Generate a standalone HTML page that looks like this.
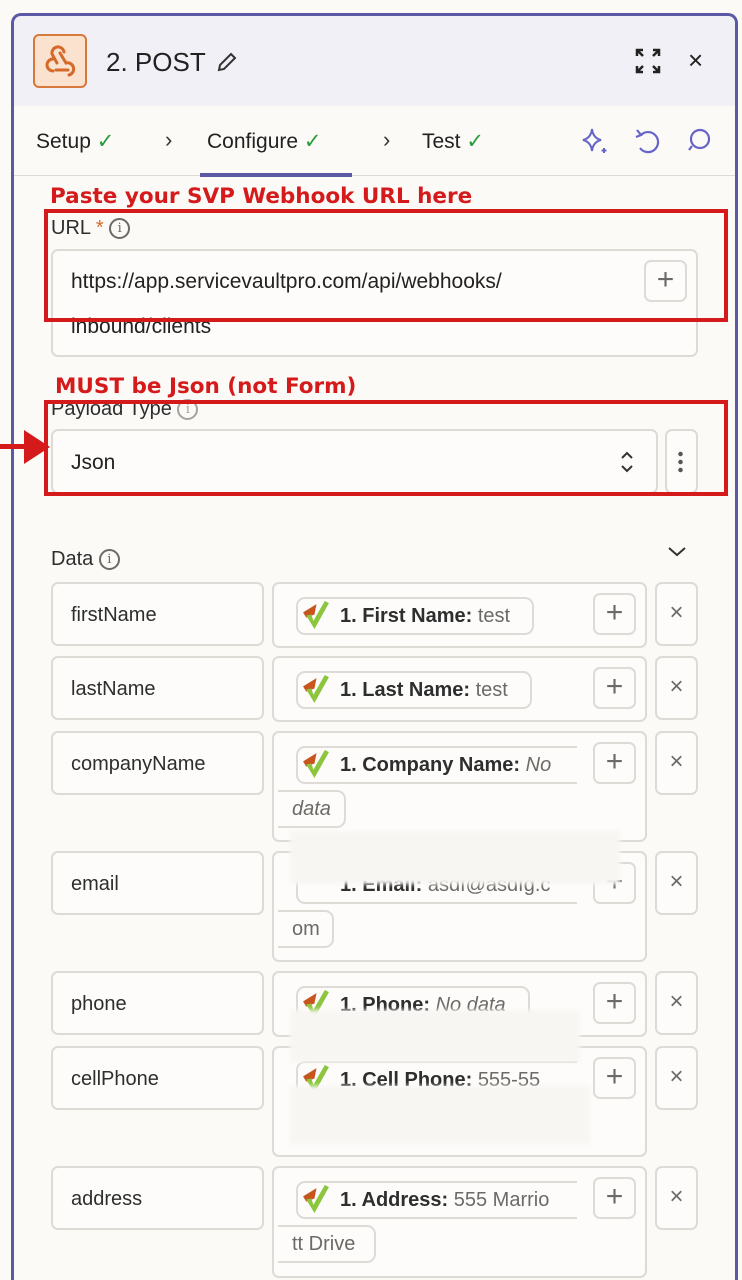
<!DOCTYPE html><html style="width:742px;height:1280px;overflow:hidden"><head><style>
*{box-sizing:border-box;margin:0;padding:0}
body{width:742px;height:1280px;background:#fbfaf7;font-family:"Liberation Sans",sans-serif;color:#2d2e2e;position:relative;overflow:hidden}
.a{position:absolute}
.box{position:absolute;border:2px solid #dddbd6;border-radius:7px;background:#fdfcfa}
.lbl{position:absolute;font-size:20px;color:#2d2e2e}
.chip{position:absolute;border:2px solid #dddbd6;border-radius:9px;background:#fdfcfa;height:38px;font-size:20px;line-height:34px;padding-left:42px;white-space:nowrap;overflow:hidden}
.chip b{font-weight:bold;color:#2d2e2e}
.chip span{color:#6b6a66}
.plus{position:absolute;border:2px solid #dddbd6;border-radius:7px;background:#fdfcfa;width:43px;height:42px;text-align:center;font-size:30px;line-height:36px;color:#6b6a66;font-weight:300}
.x{position:absolute;border:2px solid #dddbd6;border-radius:7px;background:#fdfcfa;width:43px;height:64px;text-align:center;font-size:24px;line-height:58px;color:#6b6a66}
.blur{position:absolute;background:#f7f6f3;filter:blur(2px)}
.red{position:absolute;border:4px solid #d41a1a}
.rt{position:absolute;color:#d41a1a;font-family:"DejaVu Sans",sans-serif;font-weight:bold;font-size:21.5px}
.info{display:inline-block;width:21px;height:21px;border:2px solid #6b6a66;border-radius:50%;font-size:13px;line-height:17px;text-align:center;color:#6b6a66;vertical-align:middle;font-family:"DejaVu Serif",serif}
</style></head><body>
<div class="a" style="left:11px;top:13px;width:727px;height:1267px;border:3px solid #5b58a6;border-bottom:none;border-radius:10px 10px 0 0;background:#fbfaf7"></div>
<div class="a" style="left:14px;top:16px;width:721px;height:90px;background:#f0f0f6;border-radius:8px 8px 0 0"></div>
<div class="a" style="left:33px;top:34px;width:54px;height:54px;border:2px solid #d6793a;border-radius:6px;background:#fbe2cf"></div>
<svg class="a" style="left:40px;top:41px" width="40" height="40" viewBox="0 0 40 40" fill="none" stroke="#d5692a" stroke-width="3" stroke-linecap="round"><path d="M17 22 L12 13 A6 6 0 1 1 24 11"/><path d="M13 30 A6 6 0 1 1 13 18 M16 29 H28"/><path d="M20 12 L26 22 A6 6 0 1 1 29 34"/></svg>
<div class="a" style="left:106px;top:47px;font-size:26px;color:#222">2. POST</div>
<svg class="a" style="left:215px;top:50px" width="24" height="24" viewBox="0 0 24 24" fill="none" stroke="#333" stroke-width="2"><path d="M4 20 L5 15 L16 4 L20 8 L9 19 Z"/></svg>
<svg class="a" style="left:634px;top:47px" width="28" height="28" viewBox="0 0 28 28" fill="none" stroke="#222" stroke-width="2.5"><path d="M3 9V3H9M3 3L9 9M19 3H25V9M25 3L19 9M3 19V25H9M3 25L9 19M25 19V25H19M25 25L19 19"/></svg>
<div class="a" style="left:688px;top:45px;font-size:26px;color:#222">×</div>
<div class="a" style="left:14px;top:106px;width:721px;height:70px;border-bottom:1px solid #dcdad5"></div>
<div class="a" style="left:36px;top:129px;font-size:21px;color:#222">Setup <span style="color:#2a9a3a">✓</span></div>
<div class="a" style="left:165px;top:127px;font-size:22px;color:#333">›</div>
<div class="a" style="left:207px;top:129px;font-size:21px;color:#222">Configure <span style="color:#2a9a3a">✓</span></div>
<div class="a" style="left:200px;top:173px;width:152px;height:4px;background:#5b58a6"></div>
<div class="a" style="left:383px;top:127px;font-size:22px;color:#333">›</div>
<div class="a" style="left:422px;top:129px;font-size:21px;color:#222">Test <span style="color:#2a9a3a">✓</span></div>
<svg class="a" style="left:580px;top:126px" width="32" height="30" viewBox="0 0 32 30" fill="none" stroke="#6664c8" stroke-width="2"><path d="M12 3 Q13 12 21 14 Q13 16 12 25 Q11 16 3 14 Q11 12 12 3Z"/><path d="M24 22 v5 M21.5 24.5 h5"/></svg>
<svg class="a" style="left:632px;top:126px" width="30" height="30" viewBox="0 0 30 30" fill="none" stroke="#6664c8" stroke-width="2.2"><path d="M9 9 A10 10 0 1 1 8 22"/><path d="M5 4 L9 9 L4 11"/></svg>
<svg class="a" style="left:684px;top:126px" width="30" height="30" viewBox="0 0 30 30" fill="none" stroke="#6664c8" stroke-width="2.2"><circle cx="16" cy="13" r="9"/><path d="M8 20 L5 24"/></svg>

<div class="rt" style="left:50px;top:184px">Paste your SVP Webhook URL here</div>
<div class="lbl" style="left:51px;top:217px">URL <span style="color:#d5692a">*</span> <span class="info">i</span></div>
<div class="box" style="left:51px;top:249px;width:647px;height:108px"></div>
<div class="a" style="left:71px;top:270px;font-size:21px;color:#222">https://app.servicevaultpro.com/api/webhooks/</div>
<div class="a" style="left:71px;top:315px;font-size:21px;color:#222">inbound/clients</div>
<div class="plus" style="left:644px;top:260px">+</div>
<div class="red" style="left:44px;top:209px;width:684px;height:113px"></div>

<div class="rt" style="left:55px;top:374px">MUST be Json (not Form)</div>
<div class="lbl" style="left:51px;top:398px">Payload Type <span class="info" style="opacity:.6">i</span></div>
<div class="box" style="left:51px;top:429px;width:607px;height:65px"></div>
<div class="a" style="left:71px;top:451px;font-size:21px;color:#222">Json</div>
<svg class="a" style="left:617px;top:449px" width="20" height="26" viewBox="0 0 20 26" fill="none" stroke="#333" stroke-width="2"><path d="M5 9 L10 4 L15 9 M5 17 L10 22 L15 17"/></svg>
<div class="box" style="left:665px;top:429px;width:33px;height:65px"></div>
<div class="a" style="left:678px;top:450px;width:5px;height:24px;background:radial-gradient(circle,#555 2px,transparent 2.5px) 0 0/5px 8px"></div>
<div class="red" style="left:44px;top:400px;width:684px;height:96px"></div>
<div class="a" style="left:0;top:444px;width:26px;height:5px;background:#d41a1a"></div>
<div class="a" style="left:24px;top:430px;width:0;height:0;border-top:17px solid transparent;border-bottom:17px solid transparent;border-left:26px solid #d41a1a"></div>

<div class="lbl" style="left:51px;top:548px">Data <span class="info">i</span></div>
<svg class="a" style="left:666px;top:543px" width="22" height="16" viewBox="0 0 22 16" fill="none" stroke="#333" stroke-width="2"><path d="M3 5 L11 12 L19 5"/></svg>

<div class="box" style="left:51px;top:582px;width:213px;height:64px"></div><div class="lbl" style="left:71px;top:604px">firstName</div>
<div class="box" style="left:272px;top:582px;width:375px;height:66px"></div>
<div class="chip" style="left:296px;top:597px;width:238px"><b>1. First Name:</b> <span>test</span></div>
<div class="plus" style="left:593px;top:593px">+</div><div class="x" style="left:655px;top:582px">×</div>

<div class="box" style="left:51px;top:656px;width:213px;height:64px"></div><div class="lbl" style="left:71px;top:678px">lastName</div>
<div class="box" style="left:272px;top:656px;width:375px;height:66px"></div>
<div class="chip" style="left:296px;top:671px;width:236px"><b>1. Last Name:</b> <span>test</span></div>
<div class="plus" style="left:593px;top:667px">+</div><div class="x" style="left:655px;top:656px">×</div>

<div class="box" style="left:51px;top:731px;width:213px;height:64px"></div><div class="lbl" style="left:71px;top:753px">companyName</div>
<div class="box" style="left:272px;top:731px;width:375px;height:111px"></div>
<div class="chip" style="left:296px;top:746px;width:281px;border-right:none;border-radius:9px 0 0 9px"><b>1. Company Name:</b> <span><i>No</i></span></div>
<div class="chip" style="left:278px;top:790px;width:68px;padding-left:14px;border-left:none;border-radius:0 9px 9px 0"><span><i>data</i></span></div>
<div class="plus" style="left:593px;top:742px">+</div><div class="x" style="left:655px;top:731px">×</div>

<div class="box" style="left:51px;top:851px;width:213px;height:64px"></div><div class="lbl" style="left:71px;top:873px">email</div>
<div class="box" style="left:272px;top:851px;width:375px;height:111px"></div>
<div class="chip" style="left:296px;top:866px;width:281px;border-right:none;border-radius:9px 0 0 9px"><b>1. Email:</b> <span>asdf@asdfg.c</span></div>
<div class="chip" style="left:278px;top:910px;width:56px;padding-left:14px;border-left:none;border-radius:0 9px 9px 0"><span>om</span></div>
<div class="plus" style="left:593px;top:862px">+</div><div class="x" style="left:655px;top:851px">×</div>

<div class="box" style="left:51px;top:971px;width:213px;height:64px"></div><div class="lbl" style="left:71px;top:993px">phone</div>
<div class="box" style="left:272px;top:971px;width:375px;height:66px"></div>
<div class="chip" style="left:296px;top:986px;width:234px"><b>1. Phone:</b> <span><i>No data</i></span></div>
<div class="plus" style="left:593px;top:982px">+</div><div class="x" style="left:655px;top:971px">×</div>

<div class="box" style="left:51px;top:1046px;width:213px;height:64px"></div><div class="lbl" style="left:71px;top:1068px">cellPhone</div>
<div class="box" style="left:272px;top:1046px;width:375px;height:111px"></div>
<div class="chip" style="left:296px;top:1061px;width:281px;border-right:none;border-radius:9px 0 0 9px"><b>1. Cell Phone:</b> <span>555-55</span></div>
<div class="plus" style="left:593px;top:1057px">+</div><div class="x" style="left:655px;top:1046px">×</div>

<div class="box" style="left:51px;top:1166px;width:213px;height:64px"></div><div class="lbl" style="left:71px;top:1188px">address</div>
<div class="box" style="left:272px;top:1166px;width:375px;height:112px"></div>
<div class="chip" style="left:296px;top:1181px;width:281px;border-right:none;border-radius:9px 0 0 9px"><b>1. Address:</b> <span>555 Marrio</span></div>
<div class="chip" style="left:278px;top:1225px;width:98px;padding-left:14px;border-left:none;border-radius:0 9px 9px 0"><span>tt Drive</span></div>
<div class="plus" style="left:593px;top:1177px">+</div><div class="x" style="left:655px;top:1166px">×</div>

<svg width="0" height="0" style="position:absolute"><defs><g id="ck"><path d="M1 12 L14 4 L12 14 L4 17 Z" fill="#c8551e"/><path d="M4 15 L9 14 L11 20 L22 1 L26 3 L12 28 Z" fill="#8cc63f"/></g></defs></svg>
<svg class="a" style="left:302px;top:600px" width="28" height="30" viewBox="0 0 27 29"><use href="#ck"/></svg>
<svg class="a" style="left:302px;top:674px" width="28" height="30" viewBox="0 0 27 29"><use href="#ck"/></svg>
<svg class="a" style="left:302px;top:749px" width="28" height="30" viewBox="0 0 27 29"><use href="#ck"/></svg>
<svg class="a" style="left:302px;top:989px" width="28" height="30" viewBox="0 0 27 29"><use href="#ck"/></svg>
<svg class="a" style="left:302px;top:1064px" width="28" height="30" viewBox="0 0 27 29"><use href="#ck"/></svg>
<svg class="a" style="left:302px;top:1184px" width="28" height="30" viewBox="0 0 27 29"><use href="#ck"/></svg>
<div class="blur" style="left:290px;top:1010px;width:290px;height:52px"></div>
<div class="blur" style="left:290px;top:1086px;width:300px;height:58px"></div>
<div class="blur" style="left:290px;top:831px;width:330px;height:53px"></div>
</body></html>
